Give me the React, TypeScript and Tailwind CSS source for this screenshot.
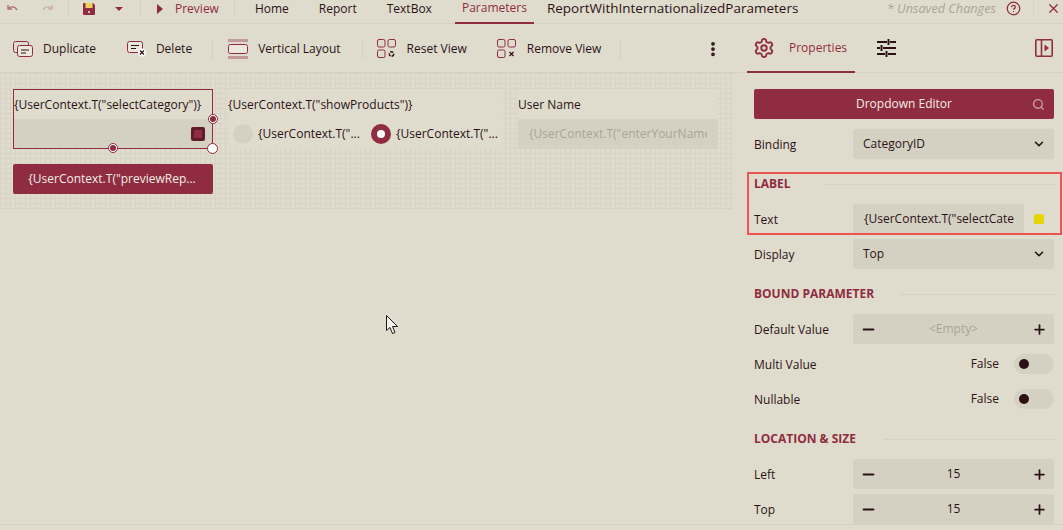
import { ChevronDown, Minus, Plus, Search, Settings, X, CircleHelp, MoreVertical } from 'lucide-react'
import type { ReactNode } from 'react'

const MAROON = '#8f2c41'

function Sep({ className = 'h-[15px]' }: { className?: string }) {
  return <div className={`w-px bg-[#d5d1c1] ${className}`} />
}

function LayoutIcon({ kind }: { kind: 'reset' | 'remove' }) {
  return (
    <svg width="20" height="20" viewBox="0 0 20 20" fill="none" stroke={MAROON} strokeWidth="1">
      <rect x="0.5" y="0.5" width="7.5" height="7.5" rx="1.5" />
      <rect x="11" y="0.5" width="7.5" height="7.5" rx="1.5" />
      <rect x="0.5" y="11" width="7.5" height="7.5" rx="1.5" />
      {kind === 'remove' ? (
        <path d="M12.5 13l4 4M16.5 13l-4 4" stroke="#2b1216" strokeWidth="1.2" />
      ) : (
        <circle cx="14.5" cy="15" r="2.2" stroke="#2b1216" strokeWidth="1.4" strokeDasharray="3 1" />
      )}
    </svg>
  )
}

function ToolButton({ icon, label, className = '' }: { icon: ReactNode; label: string; className?: string }) {
  return (
    <div className={`flex items-center ${className}`}>
      {icon}
      <span>{label}</span>
    </div>
  )
}

function SectionTitle({ title, lineStart }: { title: string; lineStart: string }) {
  return (
    <div className="flex h-[40px] items-center">
      <span className={`${lineStart} shrink-0 font-bold text-[12px] text-[#8f2c41]`}>{title}</span>
      <div className="h-px flex-1 bg-[#d5d1c1]" />
    </div>
  )
}

function Row({ label, children }: { label: string; children: ReactNode }) {
  return (
    <div className="flex h-[35px] items-start">
      <span className="flex h-[30px] w-[99px] shrink-0 items-center pt-px">{label}</span>
      {children}
    </div>
  )
}

function SelectField({ value }: { value: string }) {
  return (
    <div className="flex h-[30px] w-[201px] items-center justify-between rounded-[2px] bg-[#d5d1c2] pl-[10px] pr-[8px]">
      <span className="-mt-[1px]">{value}</span>
      <ChevronDown size={14} strokeWidth={2.8} />
    </div>
  )
}

function Stepper({ value, muted }: { value: string; muted?: boolean }) {
  return (
    <div className="flex h-[30px] w-[201px] items-center rounded-[2px] bg-[#d5d1c2]">
      <div className="flex w-[30px] justify-center">
        <Minus size={17} strokeWidth={2.6} />
      </div>
      <span className={`flex-1 text-center ${muted ? 'text-[#a8a498]' : ''}`}>{value}</span>
      <div className="flex w-[30px] justify-center">
        <Plus size={15} strokeWidth={2.8} />
      </div>
    </div>
  )
}

function Toggle({ label }: { label: string }) {
  return (
    <Row label={label}>
      <div className="flex h-[30px] w-[201px] items-center justify-end">
        <span className="mr-[15px] -mt-[1px]">False</span>
        <div className="flex h-[20px] w-[40px] items-center rounded-full bg-[#d5d1c2] pl-[5px]">
          <div className="h-[10px] w-[10px] rounded-full bg-[#2b1216]" />
        </div>
      </div>
    </Row>
  )
}

function Handle({ className }: { className: string }) {
  return (
    <div className={`absolute flex h-[10px] w-[10px] items-center justify-center rounded-full border border-[#8f2c41] bg-white ${className}`}>
      <div className="h-[6px] w-[6px] rounded-full bg-[#8f2c41]" />
    </div>
  )
}

function Canvas() {
  return (
    <div className="h-[136px] w-[733px] border-b border-[#d5d1c1] bg-[#e0dccd] bg-[linear-gradient(#d8d4c5_1px,transparent_1px),linear-gradient(90deg,#d8d4c5_1px,transparent_1px)] bg-[size:5px_5px] pl-[13px] pt-[16px]">
      <div className="flex gap-[15px]">
        <div className="relative h-[60px] w-[200px] border border-[#8f2c41] bg-[#e0dccd]">
          <div className="flex h-[29px] items-center whitespace-nowrap">{'{UserContext.T("selectCategory")}'}</div>
          <div className="flex h-[29px] items-center justify-end bg-[#d5d1c2] pr-[7px]">
            <div className="h-[14px] w-[14px] rounded-[2px] border-[3px] border-[#5f1c2c] bg-[#8f2c41]" />
          </div>
          <Handle className="-right-[6px] top-[24px]" />
          <Handle className="-bottom-[5px] left-[94px]" />
          <div className="absolute -bottom-[6px] -right-[6px] h-[11px] w-[11px] rounded-full border border-[#8f2c41] bg-white" />
        </div>
        <div className="h-[60px] w-[275px] bg-[#e0dccd]">
          <div className="flex h-[30px] items-center pt-[2px]">{'{UserContext.T("showProducts")}'}</div>
          <div className="flex h-[30px] items-center pl-[5px]">
            <div className="mr-[5px] h-[20px] w-[20px] rounded-full bg-[#d5d1c2]" />
            <span className="w-[113px]">{'{UserContext.T("...'}</span>
            <div className="mr-[5px] flex h-[20px] w-[20px] items-center justify-center rounded-full bg-[#8f2c41]">
              <div className="h-[8px] w-[8px] rounded-full bg-white" />
            </div>
            <span>{'{UserContext.T("...'}</span>
          </div>
        </div>
        <div className="h-[60px] w-[200px] bg-[#e0dccd]">
          <div className="flex h-[30px] items-center pt-[2px]">User Name</div>
          <div className="flex h-[30px] items-center bg-[#d5d1c2] pl-[11px] pr-[11px] text-[#a8a498]">
            <span className="overflow-hidden whitespace-nowrap">{'{UserContext.T("enterYourName")}'}</span>
          </div>
        </div>
      </div>
      <div className="mt-[15px] flex h-[30px] w-[200px] items-center justify-center rounded-[2px] bg-[#8f2c41] pr-[2px] font-medium text-[#f3efe4]">
        {'{UserContext.T("previewRep...'}
      </div>
    </div>
  )
}

export default function App() {
  return (
    <div className="relative h-[530px] w-[1063px] overflow-hidden bg-[#e0dccd] font-['Open_Sans',sans-serif] text-[12px] text-[#2b1216]">
      {/* top bar */}
      <div className="flex h-[24px] items-center border-b border-[#d5d1c1] pb-[6px]">
        <div className="flex w-[68px] items-center pl-[7px]">
          <svg width="12" height="10" viewBox="0 0 12 10" fill="none" stroke={MAROON} strokeWidth="1.4" opacity="0.6">
            <path d="M1 1v4h4M1 5c2-3 7-3 9 1" />
          </svg>
          <svg className="ml-[22px]" width="12" height="10" viewBox="0 0 12 10" fill="none" stroke={MAROON} strokeWidth="1.4" opacity="0.25">
            <path d="M11 1v4H7M11 5C9 2 4 2 2 6" />
          </svg>
        </div>
        <Sep />
        <svg className="ml-[14px]" width="12" height="12" viewBox="0 0 12 12">
          <path d="M0 1a1 1 0 0 1 1-1h9l2 2v9a1 1 0 0 1-1 1H1a1 1 0 0 1-1-1z" fill={MAROON} />
          <rect x="2.5" y="0" width="7" height="5" fill="#f0d060" />
          <circle cx="6" cy="9" r="1" fill="#f3efe4" />
        </svg>
        <div className="ml-[20px] h-0 w-0 border-x-[4px] border-t-[4px] border-x-transparent border-t-[#8f2c41]" />
        <Sep className="ml-[17px] h-[15px]" />
        <div className="ml-[16px] h-0 w-0 border-y-[5px] border-l-[6px] border-y-transparent border-l-[#8f2c41]" />
        <span className="ml-[12px] text-[#8f2c41]">Preview</span>
        <Sep className="ml-[15px] h-[15px]" />
        <span className="ml-[20px]">Home</span>
        <span className="ml-[30px]">Report</span>
        <span className="ml-[30px]">TextBox</span>
        <div className="-mb-[6px] ml-[23px] flex h-[24px] w-[79px] items-center justify-center border-b-2 border-[#8f2c41] pb-[5px] text-[#8f2c41]">Parameters</div>
        <span className="ml-[13px] text-[13.5px]">ReportWithInternationalizedParameters</span>
        <span className="ml-auto text-[12.7px] italic text-[#a8a498]">* Unsaved Changes</span>
        <CircleHelp className="ml-[10px]" size={15} color={MAROON} />
        <Sep className="ml-[12px] h-[15px]" />
        <X className="ml-[12px] mr-[2px]" size={15} color={MAROON} />
      </div>

      <div className="flex">
        <div className="w-[747px] shrink-0">
          {/* toolbar */}
          <div className="flex h-[49px] items-center border-b border-[#d5d1c1] pl-[13px] pt-[1px]">
            <ToolButton
              label="Duplicate"
              icon={
                <svg className="mr-[10px]" width="20" height="16" viewBox="0 0 20 16" fill="none" stroke={MAROON}>
                  <rect x="0.5" y="0.5" width="15" height="11" rx="2" />
                  <rect x="4.5" y="4.5" width="15" height="11" rx="2" fill="#ebe7dc" />
                  <path d="M8 9h8M8 12h5" stroke="#2b1216" />
                </svg>
              }
            />
            <ToolButton
              className="ml-[31px]"
              label="Delete"
              icon={
                <svg className="mr-[9px]" width="20" height="16" viewBox="0 0 20 16" fill="none" stroke={MAROON}>
                  <rect x="0.5" y="0.5" width="15" height="11" rx="2" fill="#ebe7dc" />
                  <path d="M4 4.5h8M4 7.5h5" stroke="#2b1216" />
                  <circle cx="15" cy="11.5" r="4" fill="#fff" stroke="none" />
                  <path d="M13 9.5l4 4M17 9.5l-4 4" stroke="#2b1216" strokeWidth="1.2" />
                </svg>
              }
            />
            <Sep className="ml-[20px] h-[20px]" />
            <ToolButton
              className="ml-[15px]"
              label="Vertical Layout"
              icon={
                <svg className="mr-[10px]" width="20" height="20" viewBox="0 0 20 20" fill="none">
                  <rect x="0" y="0" width="20" height="3" fill="#c19a9b" />
                  <rect x="0.5" y="5.5" width="19" height="9" rx="2" fill="#ebe7dc" stroke={MAROON} />
                  <rect x="0" y="17" width="20" height="3" fill="#c19a9b" />
                </svg>
              }
            />
            <Sep className="ml-[21px] h-[20px]" />
            <ToolButton className="ml-[14px]" label="Reset View" icon={<div className="mr-[10px] flex"><LayoutIcon kind="reset" /></div>} />
            <ToolButton className="ml-[30px]" label="Remove View" icon={<div className="mr-[10px] flex"><LayoutIcon kind="remove" /></div>} />
            <Sep className="ml-[19px] h-[20px]" />
            <MoreVertical className="ml-[83px]" size={18} strokeWidth={3} />
          </div>
          <Canvas />
        </div>

        {/* properties panel */}
        <div className="relative flex-1">
          <div className="flex h-[49px] items-center border-b border-[#d5d1c1] pr-[10px]">
            <div className="flex h-[49px] w-[108px] items-center border-b-2 border-[#8f2c41] pl-[6px] pt-[1px] text-[#8f2c41]">
              <Settings size={22} strokeWidth={2} />
              <span className="ml-[14px]">Properties</span>
            </div>
            <svg className="ml-[22px]" width="19" height="18" viewBox="0 0 19 18" fill="none" stroke="#2b1216" strokeWidth="2">
              <path d="M0 3h10M13 3h6M11.5 0v6M0 9h3M6 9h13M4.5 6v6M0 15h8M11 15h8M9.5 12v6" />
            </svg>
            <svg className="ml-auto" width="18" height="18" viewBox="0 0 18 18" fill="none" stroke={MAROON} strokeWidth="1.6">
              <rect x="0.8" y="0.8" width="16.4" height="16.4" rx="1" />
              <path d="M6.5 1v16" />
              <path d="M9.5 5.5l4.5 3.5-4.5 3.5z" fill={MAROON} stroke="none" />
            </svg>
          </div>
          <div className="px-[7px]">
            <div className="mt-[16px] flex h-[30px] w-[300px] items-center rounded-[2px] bg-[#8f2c41] pl-[102px] pr-[9px] font-medium text-[#f3efe4]">
              <span>Dropdown Editor</span>
              <Search className="ml-auto opacity-60" size={13} strokeWidth={2.5} />
            </div>
            <div className="mt-[10px]" />
            <Row label="Binding"><SelectField value="CategoryID" /></Row>
            <SectionTitle title="LABEL" lineStart="w-[70px]" />
            <Row label="Text">
              <div className="flex h-[30px] w-[171px] items-center overflow-hidden whitespace-nowrap rounded-[2px] bg-[#d5d1c2] pl-[11px]">
                {'{UserContext.T("selectCate'}
              </div>
              <div className="ml-[10px] mt-[10px] h-[10px] w-[10px] rounded-[2px] bg-[#e6d500]" />
            </Row>
            <Row label="Display"><SelectField value="Top" /></Row>
            <SectionTitle title="BOUND PARAMETER" lineStart="w-[146px]" />
            <Row label="Default Value"><Stepper value="<Empty>" muted /></Row>
            <Toggle label="Multi Value" />
            <Toggle label="Nullable" />
            <SectionTitle title="LOCATION & SIZE" lineStart="w-[129px]" />
            <Row label="Left"><Stepper value="15" /></Row>
            <Row label="Top"><Stepper value="15" /></Row>
          </div>
          {/* highlight around the label group */}
          <div className="absolute left-[0px] top-[148px] h-[63px] w-[315px] border-2 border-[#ef5350]" />
        </div>
      </div>

      <div className="absolute bottom-0 left-0 h-[6px] w-full border-t border-[#d5d1c1]" />

      {/* mouse pointer */}
      <svg className="absolute left-[386px] top-[315px]" width="13" height="19" viewBox="0 0 13 19">
        <path d="M0.5 0.5v15l3.5-3 2.5 6 2.5-1-2.5-6h5z" fill="#f5f3ec" stroke="#1a1a1a" />
      </svg>
    </div>
  )
}
